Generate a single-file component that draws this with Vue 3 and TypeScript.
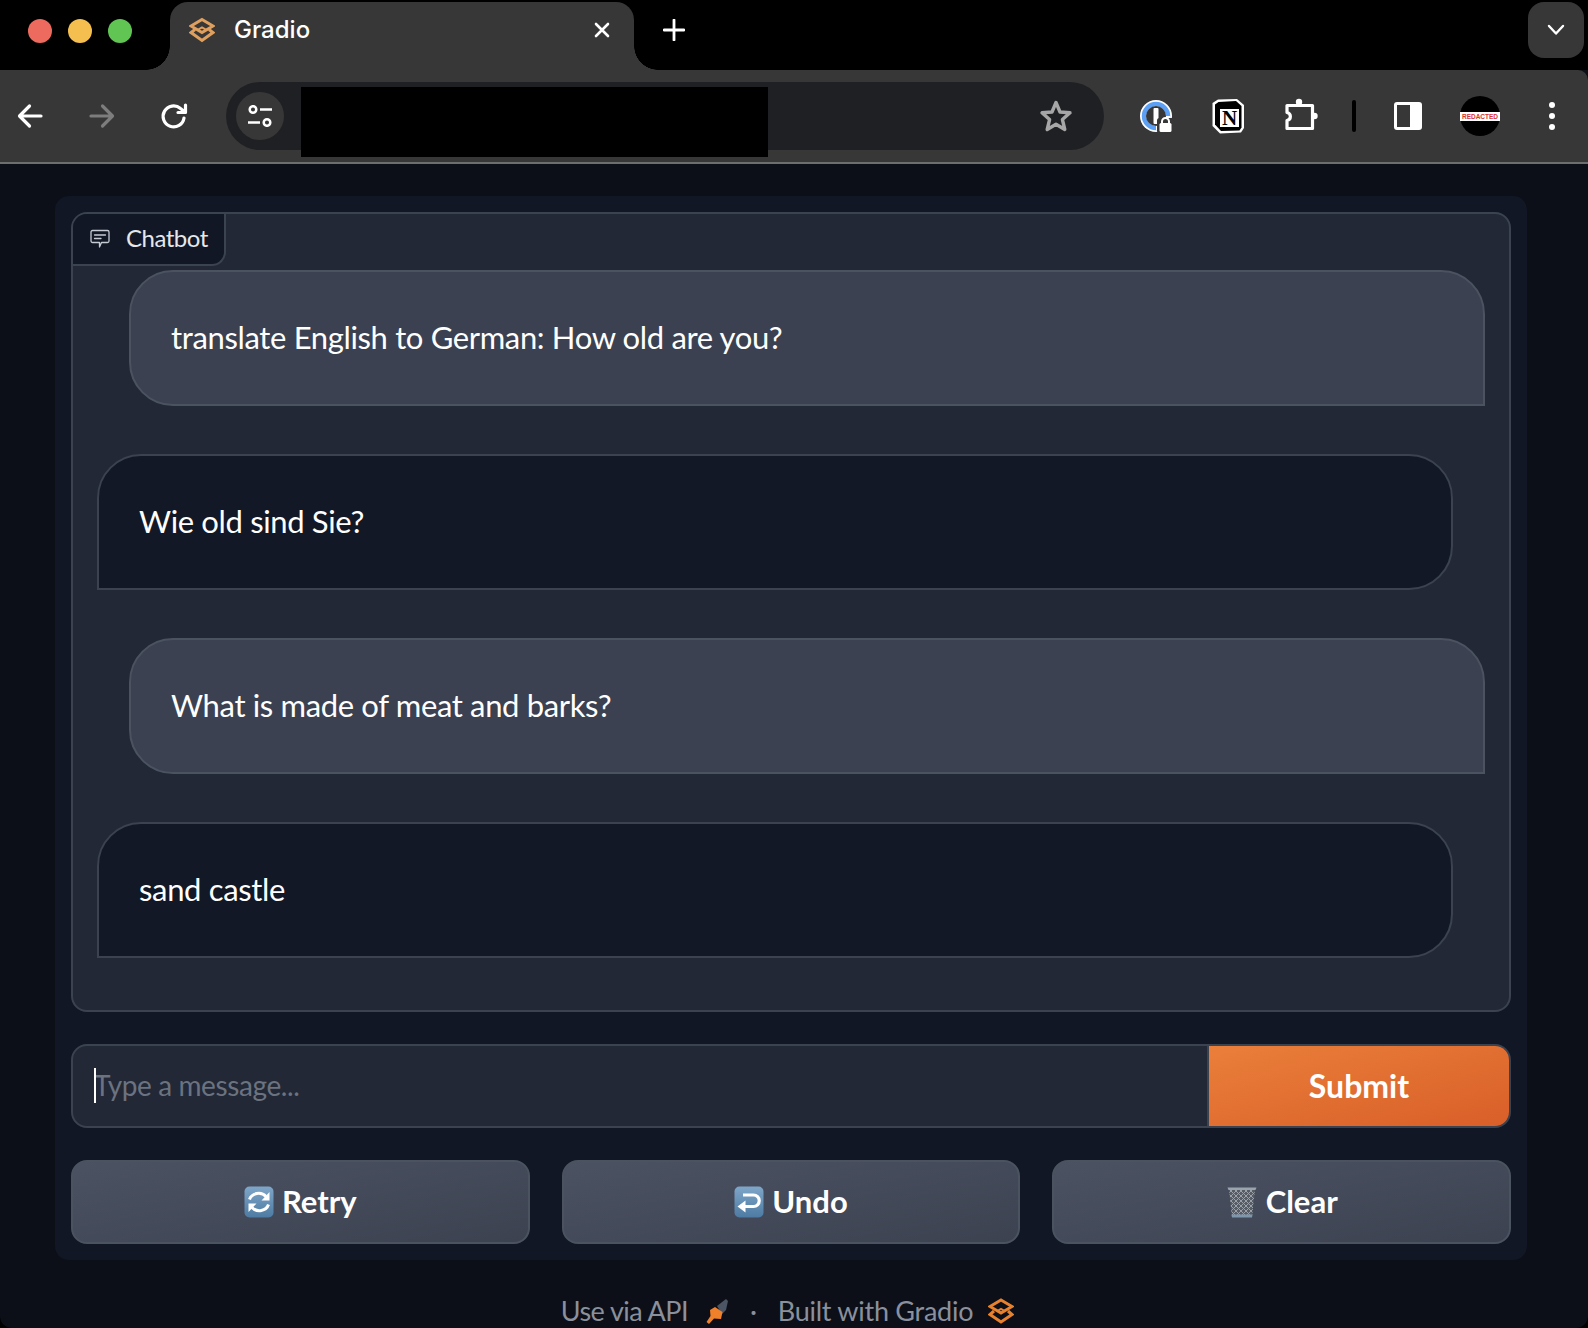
<script setup lang="ts">
interface Message {
  id: number
  role: 'user' | 'bot'
  text: string
}

const messages: Message[] = [
  { id: 1, role: 'user', text: 'translate English to German: How old are you?' },
  { id: 2, role: 'bot', text: 'Wie old sind Sie?' },
  { id: 3, role: 'user', text: 'What is made of meat and barks?' },
  { id: 4, role: 'bot', text: 'sand castle' }
]
</script>

<template>
  <div class="window">
    <header class="tabstrip">
      <div class="lights">
        <span class="light red"></span>
        <span class="light yellow"></span>
        <span class="light green"></span>
      </div>
      <div class="tab">
        <svg class="favicon" viewBox="0 0 26 26" fill="none" stroke="#dfa05f" stroke-width="3" stroke-linejoin="miter">
          <path d="M13 2.500 24 9 13 15.500 2 9Z" />
          <path d="M6 12.500 2 15.500 13 23.500 24 15.500 20 12.500" />
          <path d="M8.500 13 13 10.500 17.500 13" stroke-width="2" />
        </svg>
        <span class="tab-title">Gradio</span>
        <svg class="tab-close" viewBox="0 0 16 16" stroke="#fff" stroke-width="2.600" stroke-linecap="round">
          <path d="M2 2 14 14M14 2 2 14" />
        </svg>
      </div>
      <svg class="new-tab" viewBox="0 0 22 22" stroke="#fff" stroke-width="2.800" stroke-linecap="round">
        <path d="M11 1V21M1 11H21" />
      </svg>
      <button class="tab-search" type="button" aria-label="Search tabs">
        <svg viewBox="0 0 18 12" width="18" height="12" fill="none" stroke="#fff" stroke-width="2.400" stroke-linecap="round" stroke-linejoin="round">
          <path d="M2 2 9 9.500 16 2" />
        </svg>
      </button>
    </header>

    <nav class="toolbar">
      <div class="nav-buttons">
        <svg class="nav-icon" viewBox="0 0 32 32" fill="none" stroke="#fff" stroke-width="3.200" stroke-linecap="round" stroke-linejoin="round">
          <path d="M27 16H6M15.500 6 5.500 16 15.500 26" />
        </svg>
        <svg class="nav-icon" viewBox="0 0 32 32" fill="none" stroke="#7d7d7d" stroke-width="3.200" stroke-linecap="round" stroke-linejoin="round">
          <path d="M5 16H26M16.500 6 26.500 16 16.500 26" />
        </svg>
        <svg class="nav-icon" viewBox="0 0 32 32" fill="none" stroke="#fff" stroke-width="3.200" stroke-linecap="round" stroke-linejoin="round">
          <path d="M26 18A10.500 10.500 0 1 1 22.500 8.500L27 12" />
          <path d="M27.500 5V12.500H20" />
        </svg>
      </div>

      <div class="address">
        <span class="site-info">
          <svg viewBox="0 0 24 22" width="24" height="22" fill="none" stroke="#fff" stroke-width="2.500" stroke-linecap="butt">
            <circle cx="5" cy="4.500" r="3.300" />
            <path d="M12 4.500H24M0 17.500H12" />
            <circle cx="19" cy="17.500" r="3.300" />
          </svg>
        </span>
        <span class="redaction"></span>
        <svg class="star" viewBox="0 0 34 34" fill="none" stroke="#a6a6a6" stroke-width="3.400" stroke-linejoin="round">
          <path d="M17 3.500 21 13 31 13.800 23.400 20.500 25.800 30.500 17 25.200 8.200 30.500 10.600 20.500 3 13.800 13 13Z" />
        </svg>
      </div>

      <div class="extensions">
        <span class="ext">
          <svg viewBox="0 0 36 36" width="36" height="36">
            <circle cx="18" cy="18" r="16" fill="#fff" />
            <circle cx="18" cy="18" r="12" fill="none" stroke="#5ba0f5" stroke-width="4.500" />
            <path d="M18 30A12 12 0 0 0 30 18" fill="none" stroke="#fff" stroke-width="4.500" />
            <circle cx="18" cy="18" r="10" fill="#373737" />
            <rect x="15.500" y="10" width="5" height="16" rx="1" fill="#fff" />
            <rect x="19" y="20" width="17" height="15.500" rx="2.500" fill="#373737" />
            <path d="M24 25V23.500A3.500 3.500 0 0 1 31 23.500V25" fill="none" stroke="#fff" stroke-width="2" />
            <rect x="21.500" y="25" width="12" height="9" rx="1.500" fill="#fff" />
          </svg>
        </span>
        <span class="ext">
          <svg viewBox="0 0 34 36" width="34" height="36">
            <path d="M7 1.500 26 1 33 7V30L30 34.500 9 35.500 1.500 28V5Z" fill="#fff" />
            <path d="M7.500 4 25 3 30.500 8V29.500L28.500 32.500 10 33 4 26.500V6.500Z" fill="#000" />
            <rect x="9" y="11" width="19" height="18" fill="#fff" />
            <text class="notion-n" x="18.500" y="27" text-anchor="middle">N</text>
          </svg>
        </span>
        <span class="ext">
          <svg viewBox="0 0 36 36" width="36" height="36" fill="#fff">
            <path d="M5 7.500H30.500V30.500H5V22.500C9.500 21.500 9.500 15.500 5 14.500Z" fill="none" stroke="#fff" stroke-width="3.200" stroke-linejoin="round" />
            <circle cx="17" cy="4" r="3.200" />
            <circle cx="32.500" cy="18" r="3.200" />
          </svg>
        </span>
        <span class="divider-slot"><i class="divider"></i></span>
        <span class="ext">
          <span class="panel-icon"><i></i></span>
        </span>
        <span class="ext">
          <span class="avatar"><b>REDACTED</b></span>
        </span>
        <span class="ext">
          <span class="kebab"><i></i><i></i><i></i></span>
        </span>
      </div>
    </nav>

    <main class="content">
      <section class="panel">
        <div class="chatbot">
          <div class="block-label">
            <svg viewBox="0 -1 20 20" width="20" height="20" fill="none" stroke="#c6cad2" stroke-width="1.300" stroke-linejoin="round" stroke-linecap="round">
              <path d="M2.500 1.500H17.500A1.500 1.500 0 0 1 19 3V12A1.500 1.500 0 0 1 17.500 13.500H11.500L9.500 18 9.500 13.500H2.500A1.500 1.500 0 0 1 1 12V3A1.500 1.500 0 0 1 2.500 1.500Z" />
              <path d="M4.500 6H15.500M4.500 9.500H11" />
            </svg>
            <span>Chatbot</span>
          </div>
          <div class="messages">
            <div v-for="m in messages" :key="m.id" class="bubble" :class="m.role">{{ m.text }}</div>
          </div>
        </div>

        <div class="composer">
          <div class="input">
            <i class="caret"></i>
            <span class="placeholder">Type a message...</span>
          </div>
          <button class="submit" type="button">Submit</button>
        </div>

        <div class="actions">
          <button class="action" type="button">
            <svg class="emoji" viewBox="0 0 30 32" width="30" height="32">
              <defs>
                <linearGradient id="key-a" x1="0" y1="0" x2="0" y2="1">
                  <stop offset="0" stop-color="#7fa6c8" />
                  <stop offset="1" stop-color="#4d7ba3" />
                </linearGradient>
              </defs>
              <rect x="0.500" y="0.500" width="29" height="31" rx="5" fill="url(#key-a)" />
              <g fill="none" stroke="#fff" stroke-width="3">
                <path d="M5.500 13.500A9.500 8.500 0 0 1 22 10.500" />
                <path d="M24.500 18.500A9.500 8.500 0 0 1 8 21.500" />
              </g>
              <path d="M25.500 6V14.500H17.500Z" fill="#fff" />
              <path d="M4.500 26V17.500H12.500Z" fill="#fff" />
            </svg>
            <span>Retry</span>
          </button>
          <button class="action" type="button">
            <svg class="emoji" viewBox="0 0 30 32" width="30" height="32">
              <defs>
                <linearGradient id="key-b" x1="0" y1="0" x2="0" y2="1">
                  <stop offset="0" stop-color="#7fa6c8" />
                  <stop offset="1" stop-color="#4d7ba3" />
                </linearGradient>
              </defs>
              <rect x="0.500" y="0.500" width="29" height="31" rx="5" fill="url(#key-b)" />
              <path d="M9 9H19.500A5.500 5.500 0 0 1 19.500 20.500H9" fill="none" stroke="#fff" stroke-width="3.200" />
              <path d="M11.500 14.500V26.500L3.500 20.500Z" fill="#fff" />
            </svg>
            <span>Undo</span>
          </button>
          <button class="action" type="button">
            <svg class="emoji" viewBox="0 0 32 32" width="32" height="32">
              <defs>
                <pattern id="mesh" width="5" height="5" patternUnits="userSpaceOnUse">
                  <path d="M0 0 5 5M5 0 0 5" stroke="#9ba1a7" stroke-width="1" />
                </pattern>
              </defs>
              <path d="M3 3H29L26 31H6Z" fill="#565d66" />
              <path d="M3 3H29L26 31H6Z" fill="url(#mesh)" />
              <path d="M1.500 1.500H30.500L29.500 4H2.500Z" fill="#9aa4ad" />
              <path d="M5.500 28.500H26.500L26 31.500H6Z" fill="#7f97ad" />
            </svg>
            <span>Clear</span>
          </button>
        </div>
      </section>

      <footer class="footer">
        <span class="api">Use via API</span>
        <svg class="plug" viewBox="0 0 24 26" width="24" height="26">
          <path d="M12 8 21 1 23 3 21 12 17 16Z" fill="#4b5563" />
          <path d="M5 12 10 9 17.500 14 16 21 9 20.500 4 26 1.500 24 5.500 18Z" fill="#f0802a" />
        </svg>
        <span class="sep">·</span>
        <span>Built with Gradio</span>
        <svg class="footer-logo" viewBox="0 0 26 26" width="26" height="26" fill="none" stroke="#e8812d" stroke-width="3">
          <path d="M13 2 24 8.500 13 15 2 8.500Z" />
          <path d="M6 13 2 16.500 13 24 24 16.500 20 13" />
          <path d="M8.500 13.500 13 11 17.500 13.500" stroke-width="2" />
        </svg>
      </footer>
    </main>
  </div>
</template>

<style>
html,
body {
  margin: 0;
  background: #000;
}
</style>

<style scoped>
.window {
  width: 1588px;
  height: 1328px;
  display: flex;
  flex-direction: column;
  overflow: hidden;
  background: #0c0f18;
  border-radius: 0 0 12px 12px;
  font-family: Lato, "Open Sans", sans-serif;
}

.tabstrip {
  flex: none;
  height: 70px;
  display: flex;
  align-items: flex-start;
  background: #000;
}

.lights {
  display: flex;
  gap: 16px;
  padding: 19px 0 0 28px;
}

.light {
  width: 24px;
  height: 24px;
  border-radius: 50%;
}

.red { background: #ed6a5e; }
.yellow { background: #f4bf4f; }
.green { background: #61c554; }

.tab {
  position: relative;
  width: 464px;
  height: 68px;
  box-sizing: border-box;
  margin: 2px 0 0 38px;
  padding: 0 24px 12px 19px;
  display: flex;
  align-items: center;
  background: #373737;
  border-radius: 18px 18px 0 0;
}

.tab::before,
.tab::after {
  content: "";
  position: absolute;
  bottom: 0;
  width: 24px;
  height: 24px;
}

.tab::before {
  left: -24px;
  background: radial-gradient(circle at 0 0, transparent 23.500px, #373737 24px);
}

.tab::after {
  right: -24px;
  background: radial-gradient(circle at 100% 0, transparent 23.500px, #373737 24px);
}

.favicon {
  width: 26px;
  height: 26px;
  flex: none;
}

.tab-title {
  margin: 0 0 1px 19px;
  font-family: Inter, sans-serif;
  font-size: 24px;
  font-weight: 500;
  color: #fff;
}

.tab-close {
  width: 16px;
  height: 16px;
  margin-left: auto;
}

.new-tab {
  width: 22px;
  height: 22px;
  margin: 19px 0 0 29px;
}

.tab-search {
  width: 56px;
  height: 56px;
  margin: 2px 4px 0 auto;
  padding: 0;
  display: grid;
  place-items: center;
  border: 0;
  border-radius: 16px;
  background: #373737;
}

.toolbar {
  position: relative;
  flex: none;
  height: 94px;
  box-sizing: border-box;
  display: flex;
  align-items: center;
  background: #373737;
  border-bottom: 2px solid #6e6e6e;
  border-top-right-radius: 10px;
}

.nav-buttons {
  display: flex;
  gap: 40px;
  padding-left: 14px;
}

.nav-icon {
  width: 32px;
  height: 32px;
}

.address {
  position: relative;
  width: 878px;
  height: 68px;
  box-sizing: border-box;
  margin: 0 16px 0 36px;
  padding: 0 31px 0 10px;
  display: flex;
  align-items: center;
  justify-content: space-between;
  background: #1f2023;
  border-radius: 34px;
}

.site-info {
  width: 48px;
  height: 48px;
  display: grid;
  place-items: center;
  border-radius: 50%;
  background: #373737;
}

.redaction {
  position: absolute;
  left: 75px;
  top: 5px;
  width: 467px;
  height: 70px;
  background: #000;
}

.star {
  width: 34px;
  height: 34px;
}

.extensions {
  display: flex;
  align-items: center;
}

.ext {
  width: 72px;
  height: 44px;
  display: grid;
  place-items: center;
}

.notion-n {
  font-family: "Liberation Serif", serif;
  font-size: 21px;
  font-weight: 700;
  fill: #000;
}

.divider-slot {
  width: 36px;
  display: grid;
  place-items: center;
}

.divider {
  width: 4px;
  height: 32px;
  border-radius: 2px;
  background: #000;
}

.panel-icon {
  width: 28px;
  height: 28px;
  box-sizing: border-box;
  padding: 3px;
  display: flex;
  border-radius: 3px;
  background: #fff;
}

.panel-icon i {
  width: 13px;
  background: #373737;
}

.avatar {
  width: 40px;
  height: 40px;
  display: flex;
  align-items: center;
  justify-content: center;
  border-radius: 50%;
  background: #000;
}

.avatar b {
  width: 100%;
  height: 9px;
  background: #fff;
  color: #d9342f;
  font-family: "Liberation Sans", sans-serif;
  font-size: 6.500px;
  line-height: 9px;
  text-align: center;
}

.kebab {
  display: flex;
  flex-direction: column;
  gap: 5px;
}

.kebab i {
  width: 6px;
  height: 6px;
  border-radius: 50%;
  background: #fff;
}

.content {
  flex: 1;
  min-height: 0;
  padding: 32px 61px 0 55px;
  color: #fff;
}

.panel {
  width: 1472px;
  height: 1064px;
  box-sizing: border-box;
  display: flex;
  flex-direction: column;
  gap: 32px;
  padding: 16px;
  background: #111725;
  border-radius: 14px;
}

.chatbot {
  position: relative;
  height: 800px;
  box-sizing: border-box;
  flex: none;
  background: #222835;
  border: 2px solid #3b4250;
  border-radius: 16px;
}

.block-label {
  position: absolute;
  left: 0;
  top: 0;
  width: 153px;
  height: 52px;
  box-sizing: border-box;
  display: flex;
  align-items: center;
  gap: 16px;
  padding: 0 0 3px 17px;
  background: #111725;
  border-right: 2px solid #3b4250;
  border-bottom: 2px solid #3b4250;
  border-radius: 14px 0 14px 0;
  font-size: 24px;
  letter-spacing: -0.500px;
  color: #e5e7eb;
}

.messages {
  display: flex;
  flex-direction: column;
  gap: 48px;
  padding: 56px 24px 0 24px;
}

.bubble {
  height: 136px;
  box-sizing: border-box;
  display: flex;
  align-items: center;
  padding: 0 40px 2px;
  border: 2px solid;
  font-size: 31px;
  letter-spacing: -0.350px;
  color: #fff;
}

.user {
  margin-left: 32px;
  background: #3b4151;
  border-color: #4b5361;
  border-radius: 44px 44px 0 44px;
}

.bot {
  margin-right: 32px;
  background: #121826;
  border-color: #3b4250;
  border-radius: 44px 44px 44px 0;
}

.composer {
  flex: none;
  height: 84px;
  display: flex;
  overflow: hidden;
  box-sizing: border-box;
  border: 2px solid #3b4250;
  border-radius: 16px;
  background: #222835;
}

.input {
  flex: 1;
  position: relative;
  display: flex;
  align-items: center;
  padding: 0 0 3px 21px;
  border-right: 2px solid #3b4250;
}

.caret {
  position: absolute;
  left: 21px;
  top: 22px;
  width: 2px;
  height: 35px;
  background: #fff;
}

.placeholder {
  font-size: 28px;
  letter-spacing: -0.400px;
  color: #6b7280;
}

.submit {
  width: 300px;
  padding: 0 0 2px;
  border: 0;
  background: linear-gradient(to bottom right, #ea7f3a, #d95f29);
  color: #fff;
  font-family: inherit;
  font-size: 32px;
  font-weight: 700;
}

.actions {
  flex: none;
  display: flex;
  gap: 32px;
}

.action {
  flex: 1;
  height: 84px;
  box-sizing: border-box;
  display: flex;
  align-items: center;
  justify-content: center;
  gap: 8px;
  padding: 0;
  border: 2px solid #4b5361;
  border-radius: 16px;
  background: linear-gradient(to bottom right, #4b5262, #3c4250);
  color: #fff;
  font-family: inherit;
  font-size: 31px;
  font-weight: 700;
}

.action span {
  margin-bottom: 2px;
}

.footer {
  height: 68px;
  box-sizing: border-box;
  padding: 36px 7px 2px 0;
  display: flex;
  align-items: center;
  justify-content: center;
  gap: 17px;
  font-size: 27px;
  line-height: 28px;
  letter-spacing: -0.260px;
  color: #8a909c;
  white-space: nowrap;
}

.api {
  letter-spacing: -0.550px;
}

.sep {
  margin: 0 4px;
}

.footer-logo {
  margin-left: -2px;
}
</style>
